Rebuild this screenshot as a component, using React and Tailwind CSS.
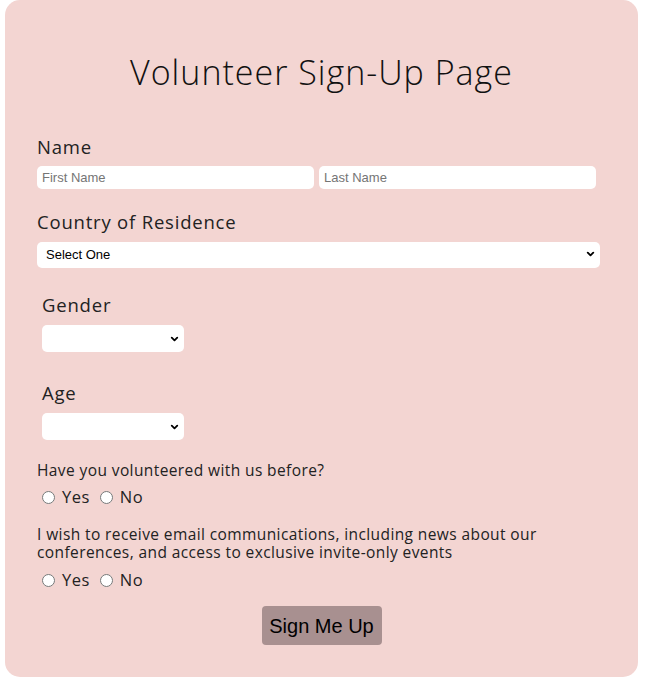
import { ChevronDown } from "lucide-react";

const labelFont = { fontFamily: '"Open Sans", "Noto Sans", sans-serif' };

function Select({ className, children }) {
  return (
    <div className={`relative ${className}`}>
      <select className="w-full h-full appearance-none bg-white rounded-[5px] pl-[9px] text-[13px] text-black outline-none" style={{ fontFamily: '"Liberation Sans", Arial, sans-serif' }}>
        {children}
      </select>
      <ChevronDown className="absolute right-[4px] top-1/2 -translate-y-1/2 w-[11px] h-[11px] text-black pointer-events-none" strokeWidth={4} />
    </div>
  );
}

function Radios({ name }) {
  return (
    <div className="flex items-center h-[18px] pl-[5px] text-[16.5px] tracking-[0.5px] text-[#222]">
      <input type="radio" name={name} className="w-[13px] h-[13px] m-0" />
      <span className="ml-[7px] mr-[10px]">Yes</span>
      <input type="radio" name={name} className="w-[13px] h-[13px] m-0" />
      <span className="ml-[7px]">No</span>
    </div>
  );
}

export default function App() {
  return (
    <div className="bg-white w-[645px] h-[685px]">
      <div className="ml-[5px] w-[633px] h-[677px] bg-[#f3d5d2] rounded-[15px] px-[32px] pt-[52px] flex flex-col" style={labelFont}>
        <h1 className="text-center text-[34px] leading-[40px] font-light tracking-[1px] text-[#111]">
          Volunteer Sign-Up Page
        </h1>

        <label className="mt-[43px] text-[18.5px] leading-[24px] text-[#222] tracking-[0.8px]">Name</label>
        <div className="mt-[7px] flex gap-[5px]">
          <input
            placeholder="First Name"
            className="w-[277px] h-[23px] bg-white rounded-[5px] px-[5px] text-[13px] placeholder:text-[#757575] outline-none"
            style={{ fontFamily: '"Liberation Sans", Arial, sans-serif' }}
          />
          <input
            placeholder="Last Name"
            className="w-[277px] h-[23px] bg-white rounded-[5px] px-[5px] text-[13px] placeholder:text-[#757575] outline-none"
            style={{ fontFamily: '"Liberation Sans", Arial, sans-serif' }}
          />
        </div>

        <label className="mt-[21px] text-[18.5px] leading-[24px] text-[#222] tracking-[0.8px]">Country of Residence</label>
        <Select className="mt-[7px] w-[563px] h-[26px]">
          <option>Select One</option>
        </Select>

        <div className="pl-[5px]">
          <label className="block mt-[26px] text-[18.5px] leading-[24px] text-[#222] tracking-[0.8px]">Gender</label>
          <Select className="mt-[8px] w-[142px] h-[27px]">
            <option></option>
          </Select>

          <label className="block mt-[29px] text-[18.5px] leading-[24px] text-[#222] tracking-[0.8px]">Age</label>
          <Select className="mt-[8px] w-[142px] h-[27px]">
            <option></option>
          </Select>
        </div>

        <p className="mt-[21px] text-[15.5px] leading-[18px] text-[#222] tracking-[0.4px]">Have you volunteered with us before?</p>
        <div className="mt-[9px]">
          <Radios name="before" />
        </div>

        <p className="mt-[19px] w-[550px] text-[15.5px] leading-[18px] text-[#222] tracking-[0.4px]">
          I wish to receive email communications, including news about our conferences, and access to exclusive invite-only events
        </p>
        <div className="mt-[10px]">
          <Radios name="email" />
        </div>

        <div className="mt-[17px] flex justify-center">
          <button
            className="w-[120px] h-[39px] bg-[#a89090] rounded-[4px] text-[20px] text-black"
            style={{ fontFamily: '"Liberation Sans", Arial, sans-serif' }}
          >
            Sign Me Up
          </button>
        </div>
      </div>
    </div>
  );
}
